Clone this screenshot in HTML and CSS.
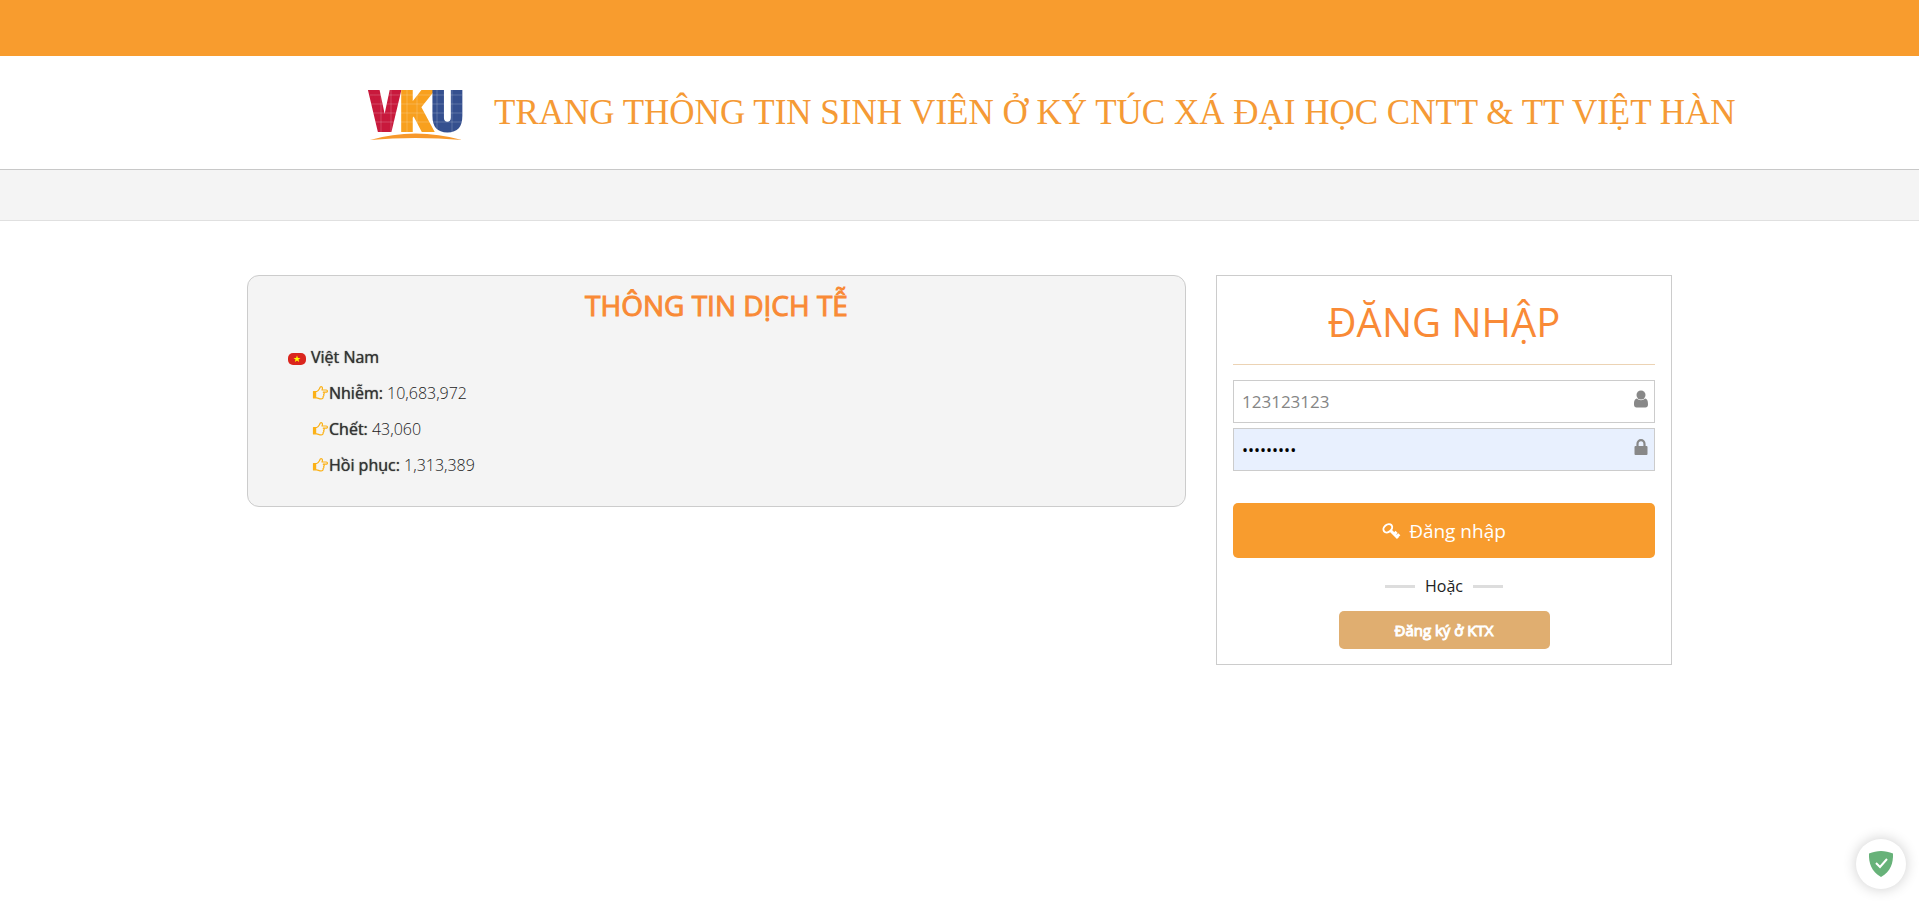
FILE: index.html
```html
<!DOCTYPE html>
<html lang="vi">
<head>
<meta charset="utf-8">
<meta name="viewport" content="width=device-width, initial-scale=1">
<title>Ký túc xá VKU</title>
<link rel="stylesheet" href="styles.css">
</head>
<body>
<svg width="0" height="0" class="sprite" aria-hidden="true">
  <symbol id="hand" viewBox="0 0 16 14">
    <path d="M1 5.500h3.200C5.500 5.300 6.300 3.900 7 2.700 7.400 1.900 7.400.6 8.600.6c1.500 0 1.700 1.700.9 3.400h4.300c1.500 0 1.500 2.200 0 2.200h-3c1.300.3 1.100 1.900.3 2.200.6.800.2 1.800-.5 2.200.3 1.600-.6 2.300-2 2.300-1.900 0-2.900-.9-4.400-1H1z" fill="none" stroke="currentColor" stroke-width="1.200" stroke-linejoin="round"/>
    <path d="M1 5.500h2.700v6.400H1z" fill="currentColor"/>
  </symbol>
</svg>
<div class="topbar"></div>
<header class="header">
  <div class="container brand">
    <svg class="logo" viewBox="0 0 92 61" role="img" aria-label="VKU">
      <text class="logo-text" x="46" y="48" text-anchor="middle"><tspan fill="#c8193c" stroke="#c8193c">V</tspan><tspan fill="#f8a01e" stroke="#f8a01e">K</tspan><tspan fill="#35508f" stroke="#35508f">U</tspan></text>
      <path d="M0 13h92M0 22h92M0 31h92M0 40h92M11 5v46M21 5v46M37 5v46M47 5v46M67 5v46M82 5v46" stroke="#fff" stroke-opacity=".2" fill="none"/>
      <path d="M0 58Q45 45 92 58Q45 54 0 58z" fill="#f7982b"/>
    </svg>
    <h1 class="title">TRANG THÔNG TIN SINH VIÊN Ở KÝ TÚC XÁ ĐẠI HỌC CNTT &amp; TT VIỆT HÀN</h1>
  </div>
</header>
<nav class="navbar"></nav>
<main class="container content">
  <section class="info">
    <h2 class="info-title">THÔNG TIN DỊCH TỄ</h2>
    <p class="country">
      <svg class="flag" viewBox="0 0 18 12" aria-hidden="true"><rect width="18" height="12" rx="5" fill="#da251d"/><path d="M9 2.500l.9 2.500h2.600l-2.100 1.600.8 2.500L9 7.600 6.800 9.100l.8-2.500L5.500 5h2.600z" fill="#ff0"/></svg>
      <b>Việt Nam</b>
    </p>
    <ul class="stats">
      <li><svg class="hand"><use href="#hand"/></svg><b>Nhiễm:</b>&nbsp;10,683,972</li>
      <li><svg class="hand"><use href="#hand"/></svg><b>Chết:</b>&nbsp;43,060</li>
      <li><svg class="hand"><use href="#hand"/></svg><b>Hồi phục:</b>&nbsp;1,313,389</li>
    </ul>
  </section>
  <form class="login">
    <h2 class="login-title">ĐĂNG NHẬP</h2>
    <div class="field">
      <input type="text" aria-label="Tài khoản" value="123123123">
      <svg class="field-icon" viewBox="0 0 16 18" aria-hidden="true"><circle cx="8" cy="5" r="4.500"/><path d="M4 8.600C1.500 9 1 11.600 1 14.500 1 16.500 2 17.500 3.500 17.500h9c1.500 0 2.500-1 2.500-3C15 11.600 14.500 9 12 8.600 10 10.800 6 10.800 4 8.600z"/></svg>
    </div>
    <div class="field">
      <input type="password" class="filled" aria-label="Mật khẩu" value="123456789">
      <svg class="field-icon" viewBox="0 0 16 18" aria-hidden="true"><path d="M4.500 9V6a3.500 3.800 0 0 1 7 0v3" fill="none" stroke="#888" stroke-width="2.200"/><rect x="1.500" y="8" width="13" height="9" rx="1"/></svg>
    </div>
    <button type="submit" class="submit">
      <svg class="key" viewBox="0 0 18 18" aria-hidden="true"><ellipse cx="5.800" cy="6.300" rx="4.800" ry="3.600" transform="rotate(-40 5.800 6.300)"/><path d="M8.500 8.500L16 16M12 12.500l2.600-2.600M14.500 15l2.800-2.800"/></svg>
      <span>Đăng nhập</span>
    </button>
    <div class="or">Hoặc</div>
    <button type="button" class="register">Đăng ký ở KTX</button>
  </form>
</main>
<button type="button" class="shield" aria-label="Bảo vệ">
  <svg viewBox="0 0 26 28" aria-hidden="true"><path d="M13 1c4 0 8 1 12 2.500C25.300 13 23 21 13 27 3 21 .7 13 1 3.500 5 2 9 1 13 1z" fill="#67b279"/><path d="M8 13l4 4 7-8" fill="none" stroke="#fff" stroke-width="2"/></svg>
</button>
</body>
</html>
```
FILE: styles.css
```css
* { box-sizing: border-box; }
body {
  margin: 0;
  background: #fff;
  color: #222;
  font: 300 16px/24px "Open Sans", "Noto Sans", sans-serif;
}
h1, h2, p, ul { margin: 0; padding: 0; font-weight: inherit; }
button, input { font: inherit; }
.sprite { position: absolute; }
.container { width: calc(100% - 32px); max-width: 1425px; margin: 0 auto; }
.topbar { height: 56px; background: #f89c2e; }
.header { border-bottom: 1px solid #c8c8c8; }
.brand { display: flex; align-items: center; gap: 32px; padding: 26px 0 26px 123px; }
.logo { flex: none; width: 92px; height: 61px; overflow: visible; }
.logo-text { font: bold 52px "DejaVu Sans Mono", monospace; stroke-width: 4px; }
.title {
  flex: none;
  color: #f59a35;
  font: 400 35px/48px "Liberation Serif", serif;
}
.navbar { height: 51px; background: #f4f4f4; border-bottom: 1px solid #e0e0e0; }
.content {
  display: grid;
  grid-template-columns: 939fr 456fr;
  gap: 30px;
  align-items: start;
  padding-top: 54px;
}
.info {
  padding: 9px 40px 29px;
  border: 1px solid #ccc;
  border-radius: 12px;
  background: #f4f4f4;
}
.info b { color: #333; font-weight: 400; text-shadow: 0 0 1px #333; }
.info-title {
  color: #f98a36;
  font-size: 28px;
  line-height: 40px;
  font-weight: 400;
  text-align: center;
  -webkit-text-stroke: 1px #f98a36;
}
.country { display: flex; align-items: center; gap: 5px; margin-top: 20px; }
.flag { width: 18px; height: 12px; margin-top: 3px; }
.stats { list-style: none; padding-left: 24px; }
.stats li { display: flex; align-items: center; margin-top: 12px; }
.hand { width: 17px; height: 14px; color: #fbb117; }
.login { padding: 16px 16px 15px; border: 1px solid #ccc; text-align: center; }
.login-title {
  margin-bottom: 15px;
  padding-bottom: 12px;
  border-bottom: 1px solid #ecd3b4;
  color: #f98a36;
  font-size: 40px;
  font-weight: 400;
  line-height: 60px;
}
.field { position: relative; margin-bottom: 5px; }
.field input {
  display: block;
  width: 100%;
  height: 43px;
  padding: 0 32px 0 8px;
  border: 1px solid #ccc;
  border-radius: 0;
  background: #fff;
  color: #858585;
  font-size: 17px;
  font-weight: 400;
  outline: 0;
}
.field .filled { background: #e8f0fe; color: #000; font-size: 16px; }
.field-icon { position: absolute; top: 10px; right: 6px; width: 16px; height: 18px; fill: #888; }
.submit {
  display: flex;
  align-items: center;
  justify-content: center;
  gap: 9px;
  width: 100%;
  height: 55px;
  margin-top: 32px;
  border: 0;
  border-radius: 5px;
  background: #f89c2e;
  color: #fff;
  font-size: 19px;
  font-weight: 400;
}
.key { width: 18px; height: 18px; fill: none; stroke: #fff; stroke-width: 2; overflow: visible; }
.key path { stroke-width: 3; }
.or {
  display: flex;
  align-items: center;
  justify-content: center;
  gap: 10px;
  margin: 16px 0 13px;
  font-weight: 400;
}
.or::before, .or::after { content: ""; width: 30px; height: 3px; background: #ddd; }
.register {
  width: 50%;
  height: 38px;
  border: 0;
  border-radius: 5px;
  background: #e0ae70;
  color: #fff;
  font-size: 15px;
  font-weight: 400;
  -webkit-text-stroke: 1px #fff;
}
.shield {
  position: fixed;
  right: 13px;
  bottom: 12px;
  display: grid;
  place-items: center;
  width: 50px;
  height: 50px;
  padding: 0;
  border: 0;
  border-radius: 50%;
  background: #fff;
  box-shadow: 0 0 14px rgba(0, 0, 0, .2);
}
.shield svg { width: 26px; height: 28px; }
```
